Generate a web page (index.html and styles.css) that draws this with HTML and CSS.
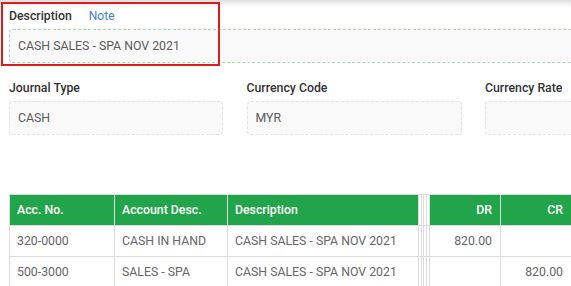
FILE: index.html
```html
<!DOCTYPE html>
<html lang="en">
<head>
    <meta charset="UTF-8">
    <title>Journal Entry</title>
    <link rel="stylesheet" href="styles.css">
</head>
<body>
    <div class="page">
        <div class="field field-wide">
            <div class="field-label">Description <a class="note-link" href="#">Note</a></div>
            <div class="field-input input-note">CASH SALES - SPA NOV 2021</div>
        </div>
        <div class="highlight"></div>

        <div class="field-row">
            <div class="field">
                <div class="field-label">Journal Type</div>
                <div class="field-input">CASH</div>
            </div>
            <div class="field">
                <div class="field-label">Currency Code</div>
                <div class="field-input">MYR</div>
            </div>
            <div class="field">
                <div class="field-label">Currency Rate</div>
                <div class="field-input"></div>
            </div>
        </div>

        <table class="entry-table">
            <colgroup>
                <col style="width:105px">
                <col style="width:113px">
                <col style="width:191px">
                <col style="width:3px">
                <col style="width:2px">
                <col style="width:3px">
                <col style="width:3px">
                <col style="width:71px">
                <col style="width:71px">
            </colgroup>
            <thead>
                <tr>
                    <th>Acc. No.</th>
                    <th>Account Desc.</th>
                    <th>Description</th>
                    <th class="hidden-col"></th>
                    <th class="hidden-col"></th>
                    <th class="hidden-col"></th>
                    <th class="hidden-col"></th>
                    <th class="num">DR</th>
                    <th class="num">CR</th>
                </tr>
            </thead>
            <tbody>
                <tr>
                    <td>320-0000</td>
                    <td>CASH IN HAND</td>
                    <td>CASH SALES - SPA NOV 2021</td>
                    <td class="hidden-col"></td>
                    <td class="hidden-col"></td>
                    <td class="hidden-col"></td>
                    <td class="hidden-col"></td>
                    <td class="num">820.00</td>
                    <td class="num"></td>
                </tr>
                <tr>
                    <td>500-3000</td>
                    <td>SALES - SPA</td>
                    <td>CASH SALES - SPA NOV 2021</td>
                    <td class="hidden-col"></td>
                    <td class="hidden-col"></td>
                    <td class="hidden-col"></td>
                    <td class="hidden-col"></td>
                    <td class="num"></td>
                    <td class="num">820.00</td>
                </tr>
            </tbody>
        </table>
    </div>
</body>
</html>
```

FILE: styles.css
```css
body {
    margin: 0;
    overflow: hidden;
    font-family: Roboto, 'Liberation Sans', sans-serif;
    background: #fff linear-gradient(#dfdfe2, #fff 7px) no-repeat;
    color: #333;
}
.page {
    position: relative;
    width: 700px;
    padding: 7px 0 0 9px;
}
.highlight {
    position: absolute;
    left: 1px;
    top: 2px;
    width: 215px;
    height: 60px;
    border: 2px solid #e01b1b;
}
.field-label {
    display: flex;
    align-items: center;
    gap: 17px;
    height: 18px;
    margin-bottom: 4px;
    font-size: 12.3px;
    font-weight: 500;
    color: #333;
}
.note-link {
    color: #3d7fd6;
    font-weight: 400;
    font-size: 12px;
    text-decoration: none;
}
.field-input {
    box-sizing: border-box;
    height: 34px;
    padding: 0 8px;
    display: flex;
    align-items: center;
    font-size: 12.3px;
    color: #5a5a5a;
    background-color: #f9f9f9;
    border: 1px dashed #e2e2e2;
    border-radius: 4px;
}
.input-note {
    border-color: #a9d9b2;
}
.field-row {
    display: grid;
    grid-template-columns: 214px 215px 214px;
    gap: 24px 23.5px;
    margin-top: 16px;
}
.entry-table {
    margin-top: 59px;
    width: 562px;
    table-layout: fixed;
    border-collapse: collapse;
    font-size: 12.3px;
}
.entry-table th,
.entry-table td {
    height: 30px;
    padding: 0 7px;
    text-align: left;
    border: 1px solid #dcdcdc;
    white-space: nowrap;
    overflow: hidden;
}
.entry-table th {
    background-color: #22a44a;
    color: #fff;
    font-weight: 500;
}
.entry-table td {
    color: #666;
}
.entry-table .num {
    text-align: right;
    padding-right: 8px;
}
.entry-table .hidden-col {
    padding: 0;
    background-color: #fff;
}
```
